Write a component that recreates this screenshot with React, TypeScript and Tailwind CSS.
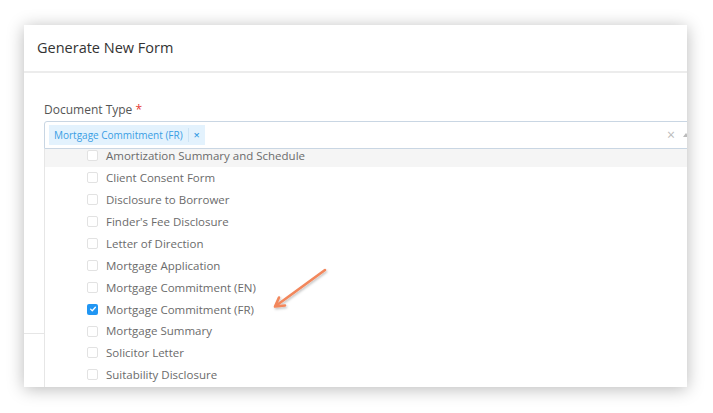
import React from 'react';

const documentTypes = [
  'Amortization Summary and Schedule',
  'Client Consent Form',
  'Disclosure to Borrower',
  "Finder's Fee Disclosure",
  'Letter of Direction',
  'Mortgage Application',
  'Mortgage Commitment (EN)',
  'Mortgage Commitment (FR)',
  'Mortgage Summary',
  'Solicitor Letter',
  'Suitability Disclosure',
];

const selected = 'Mortgage Commitment (FR)';

const Checkbox: React.FC<{ checked: boolean }> = ({ checked }) =>
  checked ? (
    <span className="w-[11px] h-[11px] rounded-[2px] bg-[#2196f3] flex items-center justify-center">
      <svg viewBox="0 0 10 10" className="w-[8px] h-[8px]">
        <path d="M2 5.2 L4.1 7.2 L8 2.8" fill="none" stroke="white" strokeWidth="1.6" strokeLinecap="round" strokeLinejoin="round" />
      </svg>
    </span>
  ) : (
    <span className="w-[11px] h-[11px] rounded-[2px] border border-[#e2e2e2] bg-white" />
  );

const App: React.FC = () => {
  return (
    <div className="w-[713px] h-[413px] bg-white pt-[25px] pl-[24px] relative" style={{ fontFamily: '"Open Sans", sans-serif' }}>
      <div className="w-[663px] h-[362px] bg-white relative overflow-hidden shadow-[0_2px_16px_rgba(0,0,0,0.28)]">
        <div className="h-[48px] border-b-2 border-[#ececec] px-[13px] flex items-center text-[14.5px] text-[#333]">
          Generate New Form
        </div>
        <div className="h-[260px] px-[20px] pt-[28px]">
          <div className="text-[12px] text-[#555] mb-[2px]">
            Document Type <span className="text-[#e53935]">*</span>
          </div>
          <div className="w-[656px] h-[28px] border border-[#c9d6e3] rounded-t-[3px] flex items-center pl-[4px] pr-[10px]">
            <span className="h-[20px] bg-[#e3f2fd] text-[#3a9ee4] text-[10px] flex items-center pl-[5px] pr-[5px] gap-[5px]">
              {selected}
              <span className="w-px h-[14px] bg-[#cde4f5]" />
              <span className="text-[11px] font-semibold">×</span>
            </span>
            <span className="ml-auto text-[#bbb] text-[14px] leading-none">×</span>
            <span className="ml-[8px] w-0 h-0 border-l-[3px] border-r-[3px] border-b-[4px] border-l-transparent border-r-transparent border-b-[#bbb]" />
          </div>
        </div>
        <div className="border-t border-[#e6e6e6] w-[20px]" />

        <div className="absolute left-[20px] top-[124px] w-[656px] h-[260px] bg-white border-l border-[#e6e6e6] overflow-hidden">
          <div className="-mt-[4px]">
            {documentTypes.map((doc, i) => (
              <div
                key={doc}
                className={`h-[21.9px] flex items-center pl-[42px] gap-[8px] text-[11.5px] text-[#6b6b6b] ${i === 0 ? 'bg-[#f5f5f5]' : ''}`}
              >
                <Checkbox checked={doc === selected} />
                <span>{doc}</span>
              </div>
            ))}
          </div>
        </div>
      </div>

      <svg className="absolute left-[265px] top-[262px] w-[70px] h-[54px]" viewBox="0 0 70 54">
        <defs>
          <filter id="sh" x="-20%" y="-20%" width="140%" height="140%">
            <feDropShadow dx="1" dy="1.5" stdDeviation="1.2" floodColor="#000" floodOpacity="0.25" />
          </filter>
        </defs>
        <g filter="url(#sh)" stroke="#f2875c" strokeWidth="2.6" strokeLinecap="round" fill="none">
          <path d="M60 8 L12 43" />
          <path d="M10 44.5 L20 43.5 M10 44.5 L14 35.5" strokeLinejoin="round" />
        </g>
      </svg>
    </div>
  );
};

export default App;
